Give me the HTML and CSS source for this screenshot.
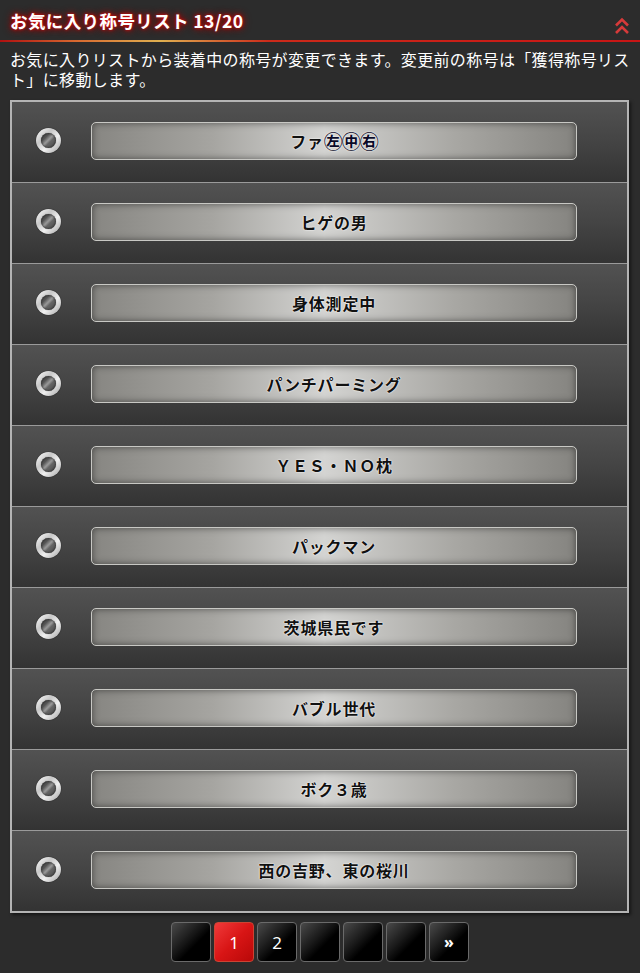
FILE: index.html
```
<!DOCTYPE html>
<html lang="ja">
<head>
  <meta charset="UTF-8" />
  <title>お気に入り称号リスト</title>
  <link rel="stylesheet" href="styles.css">
</head>
<body>

<!-- 見出し -->
<div class="title-bar">
  <h1 class="title">お気に入り称号リスト 13/20</h1>
  <svg class="title-arrow" width="16" height="20" viewBox="0 0 16 20">
    <path d="M2 9.5 L8 3.5 L14 9.5 M2 17 L8 11 L14 17" fill="none" stroke="#d63a3a" stroke-width="2.6"/>
  </svg>
</div>
<div class="title-line"></div>

<p class="desc">お気に入りリストから装着中の称号が変更できます。変更前の称号は「獲得称号リスト」に移動します。</p>

<!-- 称号リスト -->
<div class="fav-list">
  <div class="fav-row"><span class="radio"></span><div class="fav-btn">ファ<span class="maru">㊧㊥㊨</span></div></div>
  <div class="fav-row"><span class="radio"></span><div class="fav-btn">ヒゲの男</div></div>
  <div class="fav-row"><span class="radio"></span><div class="fav-btn">身体測定中</div></div>
  <div class="fav-row"><span class="radio"></span><div class="fav-btn">パンチパーミング</div></div>
  <div class="fav-row"><span class="radio"></span><div class="fav-btn">ＹＥＳ・ＮＯ枕</div></div>
  <div class="fav-row"><span class="radio"></span><div class="fav-btn">パックマン</div></div>
  <div class="fav-row"><span class="radio"></span><div class="fav-btn">茨城県民です</div></div>
  <div class="fav-row"><span class="radio"></span><div class="fav-btn">バブル世代</div></div>
  <div class="fav-row"><span class="radio"></span><div class="fav-btn">ボク３歳</div></div>
  <div class="fav-row"><span class="radio"></span><div class="fav-btn">西の吉野、東の桜川</div></div>
</div>

<!-- ページ送り -->
<div class="pager">
  <span class="page"></span>
  <span class="page current">1</span>
  <span class="page">2</span>
  <span class="page"></span>
  <span class="page"></span>
  <span class="page"></span>
  <span class="page next">»</span>
</div>

</body>
</html>
```

FILE: styles.css
```
body {
    margin: 0;
    background: #2c2c2c;
    color: #fff;
    font-family: "Noto Sans CJK JP", "Noto Sans", sans-serif;
}

/* 見出し */
.title-bar {
    display: flex;
    justify-content: space-between;
    align-items: flex-end;
    height: 40px;
    padding: 0 10px 0 10px;
    box-sizing: border-box;
}
.title {
    margin: 0 0 6px;
    font-size: 17.5px;
    line-height: 26px;
    letter-spacing: 0.4px;
    font-weight: bold;
    color: #fff;
    text-shadow: 0 0 3px #e01010, 0 0 6px #b00000, 0 0 9px #800000;
}
.title-arrow {
    margin-bottom: 4px;
}
.title-line {
    height: 2px;
    background: linear-gradient(to right, #b01010 0%, #d86a30 12%, #e0b050 25%, #cc2a1a 42%, #c81515 100%);
}

.desc {
    margin: 7px 10px 11px;
    font-size: 16px;
    line-height: 20px;
    letter-spacing: 0.35px;
    color: #fff;
}

/* 称号リスト */
.fav-list {
    margin: 0 11px 0 10px;
    border: 2px solid #b4b4b4;
    box-shadow: 2px 2px 3px rgba(0, 0, 0, 0.5);
}
.fav-row {
    display: flex;
    align-items: center;
    height: 80px;
    background: linear-gradient(to bottom, #525252 0%, #444 50%, #333 100%);
    border-top: 1px solid #9a9a9a;
}
.fav-row:first-child {
    border-top: none;
}
.radio {
    position: relative;
    flex: none;
    width: 25px;
    height: 25px;
    margin-left: 24px;
    margin-top: -3px;
    border-radius: 50%;
    background: linear-gradient(135deg, #ffffff 0%, #c8c8c8 35%, #f0f0f0 60%, #a0a0a0 100%);
    box-shadow: 0 0 1px #000;
}
.radio:after {
    content: "";
    position: absolute;
    top: 5px;
    left: 5px;
    width: 15px;
    height: 15px;
    border-radius: 50%;
    background: linear-gradient(135deg, #3c3c3c 0%, #555 30%, #9a9a9a 48%, #666 60%, #444 100%);
    box-shadow: inset 0 0 2px #111, 0 0 1px #555;
}
.fav-btn {
    width: 486px;
    height: 38px;
    margin-left: 30px;
    margin-top: -3px;
    box-sizing: border-box;
    border: 1px solid #c8c8c4;
    border-radius: 5px;
    background: linear-gradient(to right, #878682 0%, #a6a5a1 25%, #d4d4d2 48%, #a8a7a3 75%, #858480 100%);
    box-shadow: inset 0 0 7px rgba(0, 0, 0, 0.5);
    display: flex;
    align-items: center;
    justify-content: center;
    font-size: 16px;
    letter-spacing: 0.8px;
    font-weight: bold;
    color: #111;
    text-shadow: 0 0 2px #fff, 0 0 1px #fff;
}
.maru {
    font-size: 19px;
    letter-spacing: -1px;
    color: #0a0a28;
}

/* ページ送り */
.pager {
    display: flex;
    justify-content: center;
    gap: 3px;
    margin-top: 9px;
}
.page {
    width: 40px;
    height: 40px;
    box-sizing: border-box;
    border: 1px solid #6a6a6a;
    border-radius: 4px;
    background: linear-gradient(135deg, #4a4a4a 0%, #1a1a1a 40%, #000 60%, #000 100%);
    display: flex;
    align-items: center;
    justify-content: center;
    font-family: "Noto Sans", sans-serif;
    font-size: 17px;
    color: #fff;
}
.page.current {
    border-color: #c43;
    background: linear-gradient(135deg, #f03a3a 0%, #d81515 50%, #b80808 100%);
}
.page.next {
    font-size: 16px;
    font-weight: bold;
}
```
